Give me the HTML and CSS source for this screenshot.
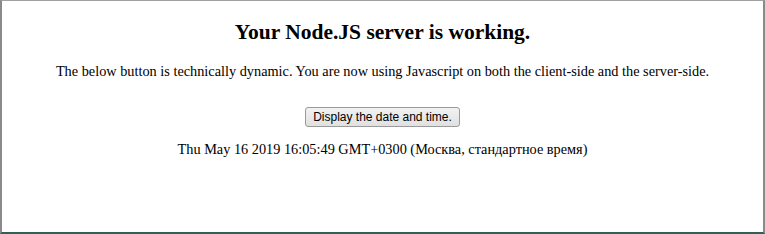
FILE: index.html
```html
<!DOCTYPE html>
<html>
<head>
<meta charset="utf-8">
<link rel="stylesheet" href="styles.css">
</head>
<body>
<div class="frame">
  <h1 class="title">Your Node.JS server is working.</h1>
  <p class="lead">The below button is technically dynamic. You are now using Javascript on both the client-side and the server-side.</p>
  <div class="actions"><button class="btn" type="button">Display the date and time.</button></div>
  <p class="date">Thu May 16 2019 16:05:49 GMT+0300 (Москва, стандартное время)</p>
</div>
</body>
</html>
```
FILE: styles.css
```css
html, body {
  margin: 0;
  padding: 0;
  background: #ffffff;
}
.frame {
  box-sizing: border-box;
  width: 765px;
  height: 234px;
  border-top: 1px solid #a0a0a0;
  border-left: 2px solid #8a8a8a;
  border-right: 2px solid #8a8a8a;
  border-bottom: 2px solid #2f5f57;
  font-family: "Liberation Serif", "Times New Roman", serif;
  color: #000;
  text-align: center;
  padding-top: 18px;
}
.title {
  margin: 0;
  font-size: 21.5px;
  font-weight: bold;
  line-height: 26px;
}
.lead {
  margin: 18px 0 0;
  font-size: 14.3px;
  line-height: 17px;
}
.actions {
  margin-top: 27px;
}
.btn {
  font-family: Arial, "Liberation Sans", sans-serif;
  font-size: 12px;
  color: #000;
  height: 20px;
  padding: 0 7px;
  border: 1px solid #9a9a9a;
  border-radius: 3px;
  background: linear-gradient(#f2f2f2, #e0e0e0);
}
.date {
  margin: 14px 0 0;
  font-size: 14.3px;
  line-height: 17px;
}
```
